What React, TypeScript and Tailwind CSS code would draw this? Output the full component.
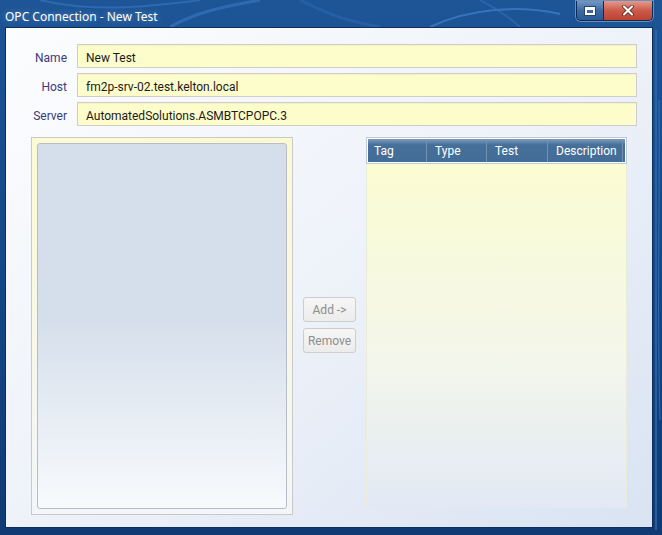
import React from "react";

const font = { fontFamily: '"Noto Sans", "Open Sans", sans-serif' };
const uiFont = { fontFamily: 'Roboto, "Noto Sans", sans-serif' };

function TitleButtons() {
  return (
    <div className="flex h-[20px] self-start mt-[1px] rounded-b-[5px] border border-t-0 border-[#0b2c57] overflow-hidden shadow-[0_0_0_1px_rgba(255,255,255,0.35)]">
      <div className="w-[27px] h-full flex items-center justify-center bg-linear-to-b from-[#7598c3] via-[#3d6aa3] to-[#2a5a98] border-r border-[#0b2c57]">
        <div className="w-[10px] h-[8px] border-[2px] border-white border-t-[3px] shadow-[0_0_0_1px_#24466f]" />
      </div>
      <div className="w-[48px] h-full flex items-center justify-center bg-linear-to-b from-[#e3998c] via-[#cc5a49] to-[#bd4232]">
        <svg width="12" height="11" viewBox="0 0 12 11">
          <path d="M2 1.5 L10 9.5 M10 1.5 L2 9.5" stroke="#4b1a14" strokeWidth="3.6" strokeLinecap="round" />
          <path d="M2 1.5 L10 9.5 M10 1.5 L2 9.5" stroke="#ffffff" strokeWidth="2.2" strokeLinecap="round" />
        </svg>
      </div>
    </div>
  );
}

function Field({ label, value }: { label: string; value: string }) {
  return (
    <>
      <div className="text-right text-[12px] text-[#3a3a7c] pt-[3px] flex items-center justify-end">{label}</div>
      <div className="h-[24px] border border-[#cdcdcd] bg-[#fdfccb] flex items-center pl-[8px] pt-[3px] text-[12px] text-[#1b1b1b] shadow-[inset_0_1px_0_#f6f3c2]">
        {value}
      </div>
    </>
  );
}

export default function App() {
  const cols = [
    { name: "Tag", w: 59, pl: 6 },
    { name: "Type", w: 60, pl: 8 },
    { name: "Test", w: 61, pl: 8 },
    { name: "Description", w: 75, pl: 8 },
  ];
  return (
    <div
      className="relative w-[662px] h-[535px] overflow-hidden bg-linear-to-b from-[#1d5597] via-[#144786] to-[#0f3a73] flex flex-col"
      style={font}
    >
      <svg className="absolute inset-0 pointer-events-none" width="662" height="535" viewBox="0 0 662 535">
        <path d="M40 0 C 90 12, 140 8, 200 0" stroke="#3a78c4" strokeWidth="2" fill="none" opacity="0.6" />
        <path d="M170 27 C 200 10, 230 6, 260 0" stroke="#3f7fcf" strokeWidth="3" fill="none" opacity="0.5" />
        <path d="M300 0 C 320 10, 340 20, 380 27" stroke="#2d6ab6" strokeWidth="3" fill="none" opacity="0.5" />
        <path d="M430 27 C 470 8, 520 5, 560 14" stroke="#4a89d6" strokeWidth="2" fill="none" opacity="0.6" />
        <path d="M480 0 C 500 10, 510 18, 520 27" stroke="#3675c2" strokeWidth="2" fill="none" opacity="0.5" />
        <path d="M656 30 L656 530" stroke="#2f6db6" strokeWidth="2" opacity="0.7" />
        <path d="M659 100 C 660 200, 657 300, 660 420" stroke="#4b86cf" strokeWidth="1" opacity="0.6" fill="none" />
      </svg>
      <div className="relative h-[27px] flex items-start pl-[5px] pr-[9px]">
        <div className="pt-[10px] text-[12px] text-white leading-[14px] [text-shadow:0_0_6px_rgba(255,255,255,0.35)]">
          OPC Connection - New Test
        </div>
        <div className="ml-auto">
          <TitleButtons />
        </div>
      </div>
      <div
        className="relative ml-[5px] mr-[9px] h-[501px] border border-[#0c2f5e] bg-linear-to-br from-[#fcfdfe] via-[#eef2f9] to-[#d9e3f2] flex flex-col"
        style={uiFont}
      >
        <div className="grid grid-cols-[61px_1fr] gap-x-[10px] gap-y-[5px] pt-[16px] pr-[15px]">
          <Field label="Name" value="New Test" />
          <Field label="Host" value="fm2p-srv-02.test.kelton.local" />
          <Field label="Server" value="AutomatedSolutions.ASMBTCPOPC.3" />
        </div>
        <div className="flex mt-[11px] pl-[25px] gap-[10px]">
          <div className="w-[262px] h-[378px] border border-[#c9c9c9] bg-linear-to-b from-[#fcfad3] to-[#f3f6f9] p-[5px]">
            <div className="w-full h-full rounded-[3px] border border-[#b9bec6] bg-linear-to-b from-[#d5dfeb] from-48% to-[#f8fafc]" />
          </div>
          <div className="w-[53px] flex flex-col justify-center gap-[6px] pb-[2px]">
            <div className="h-[25px] rounded-[3px] border border-[#cdcdcd] bg-linear-to-b from-[#f6f6f6] to-[#ececec] flex items-center justify-center text-[12px] text-[#8d8d8d]">
              Add -&gt;
            </div>
            <div className="h-[25px] rounded-[3px] border border-[#cdcdcd] bg-linear-to-b from-[#f6f6f6] to-[#ececec] flex items-center justify-center text-[12px] text-[#8d8d8d]">
              Remove
            </div>
          </div>
          <div className="w-[261px] h-[371px] flex flex-col">
            <div className="h-[27px] border border-[#bfcad6] bg-white p-[1px]">
              <div className="h-full flex bg-linear-to-b from-[#7f9dbc] from-0% via-[#46709a] via-25% to-[#436d97] text-white text-[12px]">
                {cols.map((c) => (
                  <div
                    key={c.name}
                    className="h-full flex items-center pt-[1px] border-r border-[#7391b1]"
                    style={{ width: c.w, paddingLeft: c.pl }}
                  >
                    {c.name}
                  </div>
                ))}
              </div>
            </div>
            <div className="flex-1 border-x border-[#e8ecd8] bg-linear-to-b from-[#fbfcd2] via-[#f4f7ea] via-55% to-[#e2e9f5]" />
          </div>
        </div>
      </div>
    </div>
  );
}
